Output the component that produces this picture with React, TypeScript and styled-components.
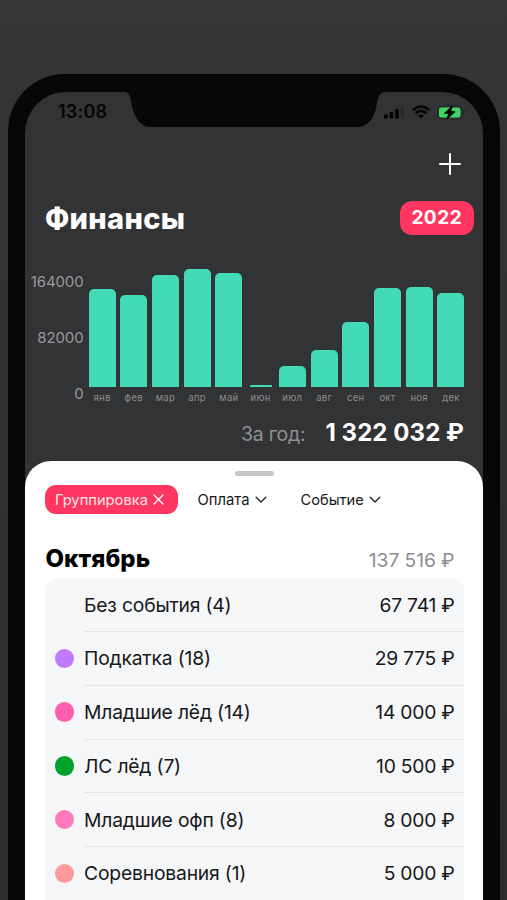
import React from "react";
import styled, { createGlobalStyle } from "styled-components";

const Global = createGlobalStyle`
  *, *::before, *::after { box-sizing: border-box; }
  html, body { margin: 0; background: #323335; }
  body { font-family: Inter, "Liberation Sans", sans-serif; height: 900px; overflow: hidden; }
`;

const Stage = styled.div`
  width: 507px;
  height: 900px;
  padding: 74px 7px 0 8px;
  overflow: hidden;
  background: linear-gradient(#343537, #303133 50%, #2b2c2c);
`;

const Phone = styled.div`
  position: relative;
  height: 900px;
  padding: 17.5px 17px 0;
  border-radius: 57px 57px 0 0;
  background: #070707;
`;

const Screen = styled.main`
  height: 880px;
  border-radius: 41px 41px 0 0;
  background: #323335;
  overflow: hidden;
`;

const Notch = styled.svg`
  position: absolute;
  left: 112px;
  top: 17px;
  display: block;
`;

const StatusBar = styled.header`
  height: 40px;
  padding: 1.5px 17px 0 33px;
  display: flex;
  justify-content: space-between;
  align-items: center;
`;

const StatusIcons = styled.div`
  display: flex;
  align-items: center;
  gap: 7.5px;
`;

const Text = styled.span<{ $size: number; $weight?: number; $color?: string; $spacing?: number }>`
  font-size: ${(p) => p.$size}px;
  font-weight: ${(p) => p.$weight ?? 400};
  color: ${(p) => p.$color ?? "#17181a"};
  letter-spacing: ${(p) => p.$spacing ?? 0}px;
  line-height: 1.2;
  white-space: nowrap;
`;

const Actions = styled.div`
  height: 64.5px;
  padding: 21px 22px 0 0;
  display: flex;
  justify-content: flex-end;
`;

const TitleRow = styled.div`
  height: 44px;
  padding: 0 9.5px 0 20px;
  display: flex;
  justify-content: space-between;
  align-items: center;
`;

const Title = styled.h1`
  margin: 0;
  padding-top: 2px;
  display: flex;
`;

const YearBadge = styled.button`
  width: 73.5px;
  height: 34px;
  padding: 1.5px 0 0;
  border: 0;
  border-radius: 12px;
  background: #ff365f;
  font-family: inherit;
  display: flex;
  align-items: center;
  justify-content: center;
`;

const Chart = styled.section`
  height: 164px;
  padding-top: 27px;
  display: grid;
  grid-template-columns: 58.5px 381px;
  column-gap: 5px;
`;

const Axis = styled.div`
  height: 137px;
  padding-top: 6px;
  display: flex;
  flex-direction: column;
  align-items: flex-end;
  gap: 38px;
`;

const Plot = styled.div`
  height: 137px;
  display: grid;
  grid-template-columns: repeat(12, 27px);
  column-gap: 4.72px;
`;

const Month = styled.div`
  display: grid;
  grid-template-rows: 119.5px 16.5px;
  align-items: end;
  justify-items: center;
`;

const Bar = styled.div<{ $value: number }>`
  width: ${(p) => (p.$value < 5 ? 22 : 27)}px;
  height: ${(p) => p.$value}px;
  border-radius: ${(p) => (p.$value < 5 ? "1px 1px 0 0" : "5px 5px 0 0")};
  background: #43dab8;
`;

const Total = styled.div`
  height: 56.5px;
  padding: 15px 19px 0 0;
  display: flex;
  justify-content: flex-end;
  align-items: baseline;
  gap: 20px;
`;

const Sheet = styled.section`
  height: 500px;
  padding: 10px 19px 0 20px;
  border-radius: 26px 26px 0 0;
  background: #fff;
`;

const Handle = styled.div`
  width: 39px;
  height: 5px;
  margin: 0 auto;
  border-radius: 3px;
  background: #c5c5c6;
`;

const Filters = styled.div`
  height: 29px;
  margin: 9.5px 0 0 -0.5px;
  display: flex;
  align-items: center;
`;

const Chip = styled.button<{ $active?: boolean; $width: number }>`
  width: ${(p) => p.$width}px;
  height: 29px;
  margin-right: ${(p) => (p.$active ? 9.5 : 0)}px;
  padding: 0 0 0 10.5px;
  border: 0;
  border-radius: 11px;
  background: ${(p) => (p.$active ? "#ff365f" : "transparent")};
  font-family: inherit;
  display: flex;
  align-items: center;
  gap: 5.5px;
`;

const ChipLabel = styled.span`
  display: flex;
  padding-top: 2px;
`;

const MonthHead = styled.div`
  height: 64.5px;
  padding: 30.5px 9.5px 0 0.5px;
  display: flex;
  justify-content: space-between;
  align-items: baseline;
`;

const Card = styled.ul`
  margin: 0;
  padding: 0;
  list-style: none;
  border-radius: 11px 11px 0 0;
  background: #f5f6f8;
`;

const Row = styled.li`
  height: 53.7px;
  padding-left: 9.5px;
  display: grid;
  grid-template-columns: 20px 1fr;
  column-gap: 9.5px;
  align-items: center;
`;

const Dot = styled.i<{ $color: string }>`
  width: 19.5px;
  height: 19.5px;
  margin-bottom: 1px;
  border-radius: 50%;
  background: ${(p) => p.$color};
`;

const RowBody = styled.div`
  height: 100%;
  padding: 1px 9.5px 0 0;
  border-bottom: 1px solid #e3e4e6;
  display: flex;
  justify-content: space-between;
  align-items: center;
`;

const months: [string, number][] = [
  ["янв", 98], ["фев", 91.5], ["мар", 112], ["апр", 117.5], ["май", 114], ["июн", 2],
  ["июл", 21], ["авг", 36.5], ["сен", 64.5], ["окт", 98.5], ["ноя", 100], ["дек", 94],
];

const rows: { name: string; sum: string; color: string }[] = [
  { name: "Без события (4)", sum: "67 741 ₽", color: "transparent" },
  { name: "Подкатка (18)", sum: "29 775 ₽", color: "#bf7aff" },
  { name: "Младшие лёд (14)", sum: "14 000 ₽", color: "#ff5bb1" },
  { name: "ЛС лёд (7)", sum: "10 500 ₽", color: "#04a22b" },
  { name: "Младшие офп (8)", sum: "8 000 ₽", color: "#ff78b9" },
  { name: "Соревнования (1)", sum: "5 000 ₽", color: "#fb999b" },
];

const Signal = () => (
  <svg width="20" height="13" viewBox="0 0 20 13" fill="#050505">
    <rect x="0" y="8.5" width="3.6" height="4" rx="1" />
    <rect x="5.6" y="6" width="3.6" height="6.5" rx="1" />
    <rect x="11.2" y="3" width="3.6" height="9.5" rx="1" />
    <rect x="16.6" y="0.5" width="3.4" height="12" rx="1" opacity=".2" />
  </svg>
);

const Wifi = () => (
  <svg width="18" height="14" viewBox="0 0 18 14" fill="none" stroke="#050505" strokeWidth="2.5">
    <path d="M1 5.1Q9-2 17 5.1" />
    <path d="M3.8 8.2Q9 3.6 14.2 8.2" />
    <path d="M6.2 10.6Q9 8.2 11.8 10.6L9 13.5Z" fill="#050505" stroke="none" />
  </svg>
);

const Battery = () => (
  <svg width="29" height="15" viewBox="0 0 29 15">
    <rect x="0.6" y="1.1" width="24.3" height="12.8" rx="3.8" fill="none" stroke="#1e2921" />
    <rect x="2" y="2.5" width="21.5" height="10" rx="2.2" fill="#3fd468" />
    <path d="M26.4 5.3Q28.4 7.5 26.4 9.7Z" fill="#1c1d1e" />
    <path d="M15.5.7 7.4 8.3h4.4L9.8 14.3 18.1 6.7h-4.4Z" fill="#080b08" stroke="#080b08" strokeWidth="1" strokeLinejoin="round" />
  </svg>
);

const Chevron = () => (
  <svg width="12" height="8" viewBox="0 0 12 8" fill="none" stroke="#242527" strokeWidth="1.4" strokeLinecap="round" strokeLinejoin="round">
    <path d="M1.2 1.3 6 6l4.8-4.7" />
  </svg>
);

const Cross = () => (
  <svg width="11" height="11" viewBox="0 0 11 11" stroke="#fff" strokeWidth="1.4" strokeLinecap="round">
    <path d="M1 1l9 9M10 1l-9 9" />
  </svg>
);

export default function App() {
  return (
    <Stage>
      <Global />
      <Phone>
        <Screen>
          <StatusBar>
            <Text $size={18} $weight={600} $color="#050505" $spacing={0.2}>13:08</Text>
            <StatusIcons>
              <Signal />
              <Wifi />
              <Battery />
            </StatusIcons>
          </StatusBar>
          <Actions>
            <svg width="22" height="22" viewBox="0 0 22 22" stroke="#fff" strokeWidth="2" strokeLinecap="round">
              <path d="M11 1v20M1 11h20" />
            </svg>
          </Actions>
          <TitleRow>
            <Title><Text $size={29} $weight={800} $color="#fff" $spacing={0.3}>Финансы</Text></Title>
            <YearBadge><Text $size={19} $weight={700} $color="#fff" $spacing={0.5}>2022</Text></YearBadge>
          </TitleRow>
          <Chart>
            <Axis>
              <Text $size={15} $color="#98999b" $spacing={-0.12}>164000</Text>
              <Text $size={15} $color="#98999b" $spacing={-0.12}>82000</Text>
              <Text $size={15} $color="#98999b" $spacing={-0.12}>0</Text>
            </Axis>
            <Plot>
              {months.map(([name, value]) => (
                <Month key={name}>
                  <Bar $value={value} />
                  <Text $size={9.5} $color="#8d8e90" $spacing={0.3}>{name}</Text>
                </Month>
              ))}
            </Plot>
          </Chart>
          <Total>
            <Text $size={19.5} $color="#8f9092" $spacing={-0.25}>За год:</Text>
            <Text $size={24} $weight={700} $color="#fff" $spacing={0.08}>1 322 032 ₽</Text>
          </Total>
          <Sheet>
            <Handle />
            <Filters>
              <Chip $active $width={133}>
                <ChipLabel><Text $size={14.7} $color="#ffe3e8">Группировка</Text></ChipLabel>
                <Cross />
              </Chip>
              <Chip $width={103}>
                <ChipLabel><Text $size={14.8}>Оплата</Text></ChipLabel>
                <Chevron />
              </Chip>
              <Chip $width={110}>
                <ChipLabel><Text $size={14.7}>Событие</Text></ChipLabel>
                <Chevron />
              </Chip>
            </Filters>
            <MonthHead>
              <Text $size={24} $weight={800} $color="#000" $spacing={0.05}>Октябрь</Text>
              <Text $size={19.3} $color="#8d8d8f" $spacing={-0.1}>137 516 ₽</Text>
            </MonthHead>
            <Card>
              {rows.map((r) => (
                <Row key={r.name}>
                  <Dot $color={r.color} />
                  <RowBody>
                    <Text $size={19.3} $spacing={-0.18}>{r.name}</Text>
                    <Text $size={19.3} $spacing={-0.25}>{r.sum}</Text>
                  </RowBody>
                </Row>
              ))}
            </Card>
          </Sheet>
        </Screen>
        <Notch width="270" height="37" viewBox="0 0 270 37" fill="#070707">
          <path d="M0 0V.7H4C8.5 .8 10 4 11 10C13 23 19 36 30 36H237C249 36 254 26 256 17C258 7 258 1 267 .7H270V0Z" />
        </Notch>
      </Phone>
    </Stage>
  );
}
